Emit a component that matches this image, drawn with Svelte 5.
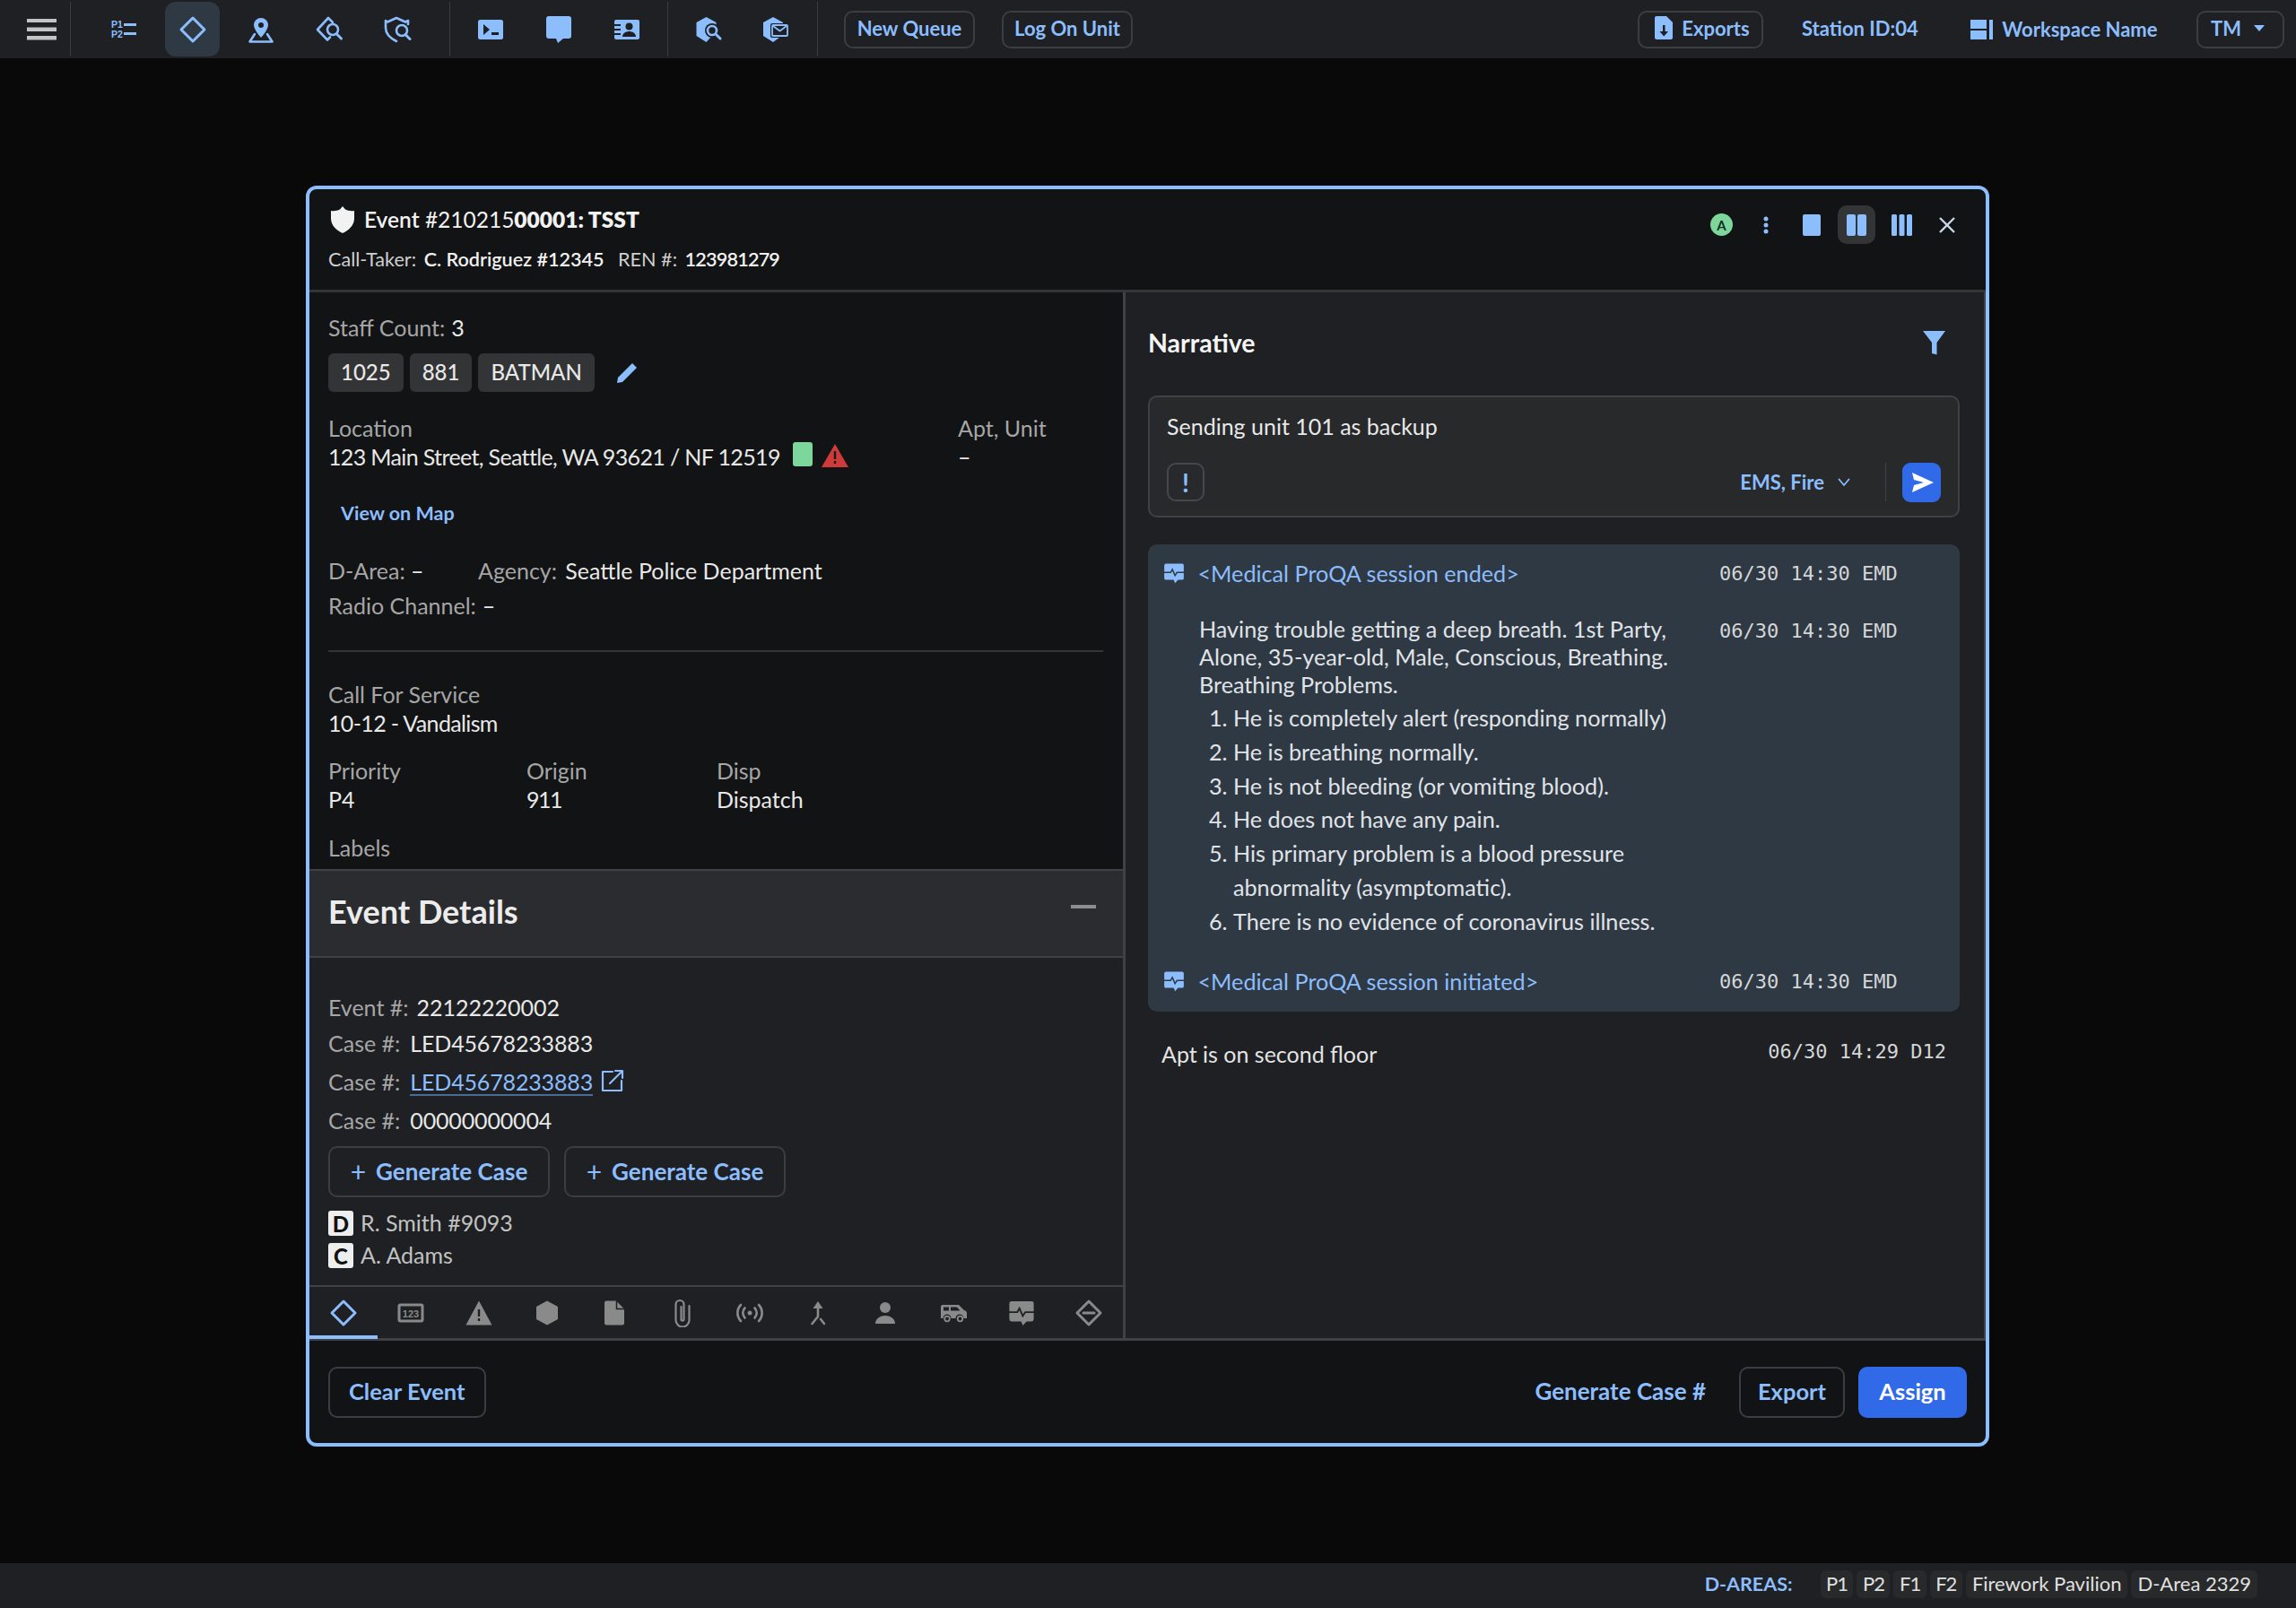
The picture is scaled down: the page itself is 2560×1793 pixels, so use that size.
<script>
  const list = [
    'He is completely alert (responding normally)',
    'He is breathing normally.',
    'He is not bleeding (or vomiting blood).',
    'He does not have any pain.',
    'His primary problem is a blood pressure abnormality (asymptomatic).',
    'There is no evidence of coronavirus illness.'
  ];
  const areas = ['P1', 'P2', 'F1', 'F2', 'Firework Pavilion', 'D-Area 2329'];
</script>

{#snippet pulse(size)}
  <svg width={size} height={size} viewBox="0 0 32 32" class="block">
    <path fill="currentColor" d="M4 2h24a2.500 2.500 0 0 1 2.500 2.500v19a2.500 2.500 0 0 1-2.500 2.500h-6l-4.500 5-2-5H4a2.500 2.500 0 0 1-2.500-2.500v-19A2.500 2.500 0 0 1 4 2z"/>
    <path class="cut" d="M0 15h11l2.500-4.500 4 9 3-4.500H32"/>
  </svg>
{/snippet}

<div class="page">
  <header class="topbar">
    <div class="group burger">
      <svg width="33" height="24" viewBox="0 0 33 24" class="block"><path fill="#c4c4c4" d="M0 0h33v4H0zM0 9.500h33v4.500H0zM0 19h33v4.500H0z"/></svg>
    </div>
    <div class="group g1">
      <span class="tool">
        <svg width="30" height="24" viewBox="0 0 30 24" class="block">
          <text x="0" y="10" class="pt">P1</text><text x="0" y="21" class="pt">P2</text>
          <path fill="currentColor" d="M14 5h14v3H14zM14 15h14v3H14z"/>
        </svg>
      </span>
      <span class="tool active">
        <svg width="32" height="32" viewBox="0 0 32 32" class="block"><path class="ln" d="M16 3l13 13-13 13L3 16z"/></svg>
      </span>
      <span class="tool">
        <svg width="32" height="32" viewBox="0 0 32 32" class="block">
          <path fill="currentColor" fill-rule="evenodd" d="M16 3a8 8 0 0 1 8 8c0 5-8 14-8 14S8 16 8 11a8 8 0 0 1 8-8zm0 5a3 3 0 1 0 0 6 3 3 0 0 0 0-6z"/>
          <path class="ln thin" d="M9 21l-5.500 8.500h25L23 21"/>
        </svg>
      </span>
      <span class="tool">
        <svg width="32" height="32" viewBox="0 0 32 32" class="block">
          <path class="ln thin" d="M20 8l-5-5L3 16l11 11.500 3-3"/>
          <circle class="ln thin" cx="20" cy="16" r="6"/>
          <path class="ln" d="M24.500 21l5 5"/>
        </svg>
      </span>
      <span class="tool">
        <svg width="32" height="32" viewBox="0 0 32 32" class="block">
          <path class="ln thin" d="M28 10V6l-3 1.500L15 3 5 7.500 3 6v8c0 7 6 12 12 15"/>
          <circle class="ln thin" cx="21" cy="17" r="6"/>
          <path class="ln" d="M25.500 22l4.500 4.500"/>
        </svg>
      </span>
    </div>
    <div class="group g2">
      <span class="tool">
        <svg width="28" height="24" viewBox="0 0 28 24" class="block">
          <rect width="28" height="22" y="1" rx="2.500" fill="currentColor"/>
          <path fill="#1e2023" d="M6 6l7 6-7 6zM15 15h8v3h-8z"/>
        </svg>
      </span>
      <span class="tool">
        <svg width="28" height="30" viewBox="0 0 28 30" class="block"><path fill="currentColor" d="M3 0h22a3 3 0 0 1 3 3v19a3 3 0 0 1-3 3h-6l-6 5-2-5H3a3 3 0 0 1-3-3V3a3 3 0 0 1 3-3z"/></svg>
      </span>
      <span class="tool">
        <svg width="28" height="24" viewBox="0 0 28 24" class="block">
          <path fill="currentColor" d="M2 1h24a2 2 0 0 1 2 2v18a2 2 0 0 1-2 2H2a2 2 0 0 1-2-2V3a2 2 0 0 1 2-2z"/>
          <path fill="#1e2023" d="M0 6h7v2H0zM0 11h7v2H0zM0 16h7v2H0z"/>
          <circle cx="16.500" cy="8.500" r="4" fill="#1e2023"/>
          <path fill="#1e2023" d="M9 20c0-4 4-6 7.500-6s7.500 2 7.500 6z"/>
        </svg>
      </span>
    </div>
    <div class="group g3">
      <span class="tool">
        <svg width="32" height="32" viewBox="0 0 32 32" class="block">
          <path fill="currentColor" d="M12.500 2l11 6v10l-11 12-11-7V8z"/>
          <circle cx="19" cy="17" r="8" fill="#1e2023"/>
          <circle class="ln thin" cx="19" cy="17" r="5"/>
          <path class="ln" d="M23.500 21.500l4.500 4.500"/>
        </svg>
      </span>
      <span class="tool">
        <svg width="32" height="32" viewBox="0 0 32 32" class="block">
          <path fill="currentColor" d="M13 2l11 6v14l-11 8-11-7V8z"/>
          <rect x="10" y="9" width="21" height="16" rx="2" fill="#1e2023"/>
          <rect x="12" y="11" width="17" height="12" rx="1" class="ln hair"/>
          <path class="ln hair" d="M13 12l7.500 5.500L28 12"/>
        </svg>
      </span>
    </div>
    <div class="group g4">
      <button class="ghost top">New Queue</button>
      <button class="ghost top">Log On Unit</button>
    </div>
    <div class="right">
      <button class="ghost top exports">
        <svg width="20" height="26" viewBox="0 0 20 26" class="block">
          <path fill="currentColor" d="M2 0h11l7 7v17a2 2 0 0 1-2 2H2a2 2 0 0 1-2-2V2a2 2 0 0 1 2-2z"/>
          <path fill="#1e2023" d="M9 10h2.500v7H15l-4.750 5.500L5.500 17H9z"/>
        </svg>
        Exports
      </button>
      <span class="blue-b station">Station ID:04</span>
      <span class="blue-b ws">
        <svg width="25" height="22" viewBox="0 0 25 22" class="block"><path fill="currentColor" d="M0 0h18v10H0zM0 12h18v10H0zM21 0h4v22h-4z"/></svg>
        Workspace Name
      </span>
      <button class="ghost top tm">TM <span class="caret"></span></button>
    </div>
  </header>

  <main class="stage">
    <section class="modal">
      <div class="mhead">
        <div>
          <div class="title">
            <svg width="26" height="30" viewBox="0 0 26 30" class="block">
              <path fill="#f2f2f2" d="M13 0l3 3.500c3 1.500 6 2 10 1.500v8c0 8-5 13-13 17C5 26 0 21 0 13V5c4 .5 7 0 10-1.500z"/>
            </svg>
            <span class="ttext"><b class="semi">Event</b> <span class="reg">#210215</span><b class="full">00001: TSST</b></span>
          </div>
          <div class="taker">
            <span class="soft">Call-Taker:</span> <b class="semi val">C. Rodriguez #12345</b>
            <span class="soft ren">REN #:</span> <b class="semi val digits">123981279</b>
          </div>
        </div>
        <div class="tools">
          <span class="avatar">A</span>
          <svg width="6" height="20" viewBox="0 0 6 20" class="block dots"><circle cx="3" cy="3" r="2.500"/><circle cx="3" cy="10" r="2.500"/><circle cx="3" cy="17" r="2.500"/></svg>
          <svg width="20" height="24" viewBox="0 0 20 24" class="block lay one"><rect width="20" height="24" rx="2"/></svg>
          <span class="layon">
            <svg width="22" height="24" viewBox="0 0 22 24" class="block lay"><rect width="10" height="24" rx="2"/><rect x="12" width="10" height="24" rx="2"/></svg>
          </span>
          <svg width="23" height="24" viewBox="0 0 23 24" class="block lay three"><rect width="6" height="24" rx="1.500"/><rect x="8.500" width="6" height="24" rx="1.500"/><rect x="17" width="6" height="24" rx="1.500"/></svg>
          <svg width="20" height="20" viewBox="0 0 20 20" class="block close"><path d="M2 2l16 16M18 2L2 18"/></svg>
        </div>
      </div>

      <div class="mbody">
        <div class="leftcol">
          <div class="info">
            <div class="row"><span class="lab">Staff Count:</span> 3</div>
            <div class="chips">
              <span class="chip">1025</span><span class="chip">881</span><span class="chip">BATMAN</span>
              <svg width="24" height="24" viewBox="0 0 24 24" class="block pencil"><path fill="currentColor" d="M18 1l5 5L7 22l-6 1 1-6z"/></svg>
            </div>
            <div class="locgrid">
              <div>
                <div class="line lab">Location</div>
                <div class="line addr"><span class="tight">123 Main Street, Seattle, WA 93621 / NF 12519</span>
                  <span class="flag"></span>
                  <svg width="30" height="26" viewBox="0 0 30 26" class="block warn"><path fill="#cf3a3a" d="M15 0l15 26H0z"/><path fill="#1b1b1b" d="M13.800 8h2.400v9h-2.400zM13.800 19h2.400v3h-2.400z"/></svg>
                </div>
              </div>
              <div>
                <div class="line lab">Apt, Unit</div>
                <div class="line">–</div>
              </div>
            </div>
            <div class="maplink">View on Map</div>
            <div class="row area"><span class="c1"><span class="lab">D-Area:</span> –</span><span><span class="lab">Agency:</span> <span class="agency">Seattle Police Department</span></span></div>
            <div class="row radio"><span class="lab">Radio Channel:</span> –</div>
            <hr />
            <div class="line lab">Call For Service</div>
            <div class="line tight">10-12 - Vandalism</div>
            <div class="triple">
              <div><div class="line lab">Priority</div><div class="line">P4</div></div>
              <div><div class="line lab">Origin</div><div class="line tighter">911</div></div>
              <div><div class="line lab">Disp</div><div class="line">Dispatch</div></div>
            </div>
            <div class="line lab labels">Labels</div>
          </div>

          <div class="dhead">
            <h2>Event Details</h2>
            <span class="minus"></span>
          </div>
          <div class="details">
            <div class="row g9"><span class="lab">Event #:</span> 22122220002</div>
            <div class="row m12 g11"><span class="lab">Case #:</span> <span class="led">LED45678233883</span></div>
            <div class="row m15 g11"><span class="lab">Case #:</span> <span class="ulink led">LED45678233883</span>
              <svg width="26" height="26" viewBox="0 0 26 26" class="block ext"><path class="ln hair2" d="M13 3H2v21h21V13M10 16L23 3M16 2h8v8" /></svg>
            </div>
            <div class="row m15 g11"><span class="lab">Case #:</span> <span class="led">00000000004</span></div>
            <div class="gens">
              <button class="ghost gen"><span class="plus">+</span>Generate Case</button>
              <button class="ghost gen"><span class="plus">+</span>Generate Case</button>
            </div>
            <div class="people">
              <div class="person"><span class="badge">D</span><span class="nm">R. Smith #9093</span></div>
              <div class="person"><span class="badge">C</span><span class="nm">A. Adams</span></div>
            </div>
          </div>

          <nav class="tabs">
            <span class="tab on"><svg width="32" height="32" viewBox="0 0 32 32" class="block"><path class="ln" d="M16 3l13 13-13 13L3 16z"/></svg></span>
            <span class="tab"><svg width="32" height="32" viewBox="0 0 32 32" class="block"><rect x="3" y="7" width="26" height="18" rx="1.500" class="ln"/><text x="16" y="20.500" class="tn">123</text></svg></span>
            <span class="tab"><svg width="32" height="32" viewBox="0 0 32 32" class="block"><path fill="currentColor" d="M16 2.500L30.500 29.500h-29z"/><path fill="#1e2023" d="M14.800 12h2.400v8h-2.400zM14.800 22h2.400v3h-2.400z"/></svg></span>
            <span class="tab"><svg width="32" height="32" viewBox="0 0 32 32" class="block"><path fill="currentColor" d="M16 2.500l12 6.500v14l-12 6.500L4 23V9z"/></svg></span>
            <span class="tab"><svg width="32" height="32" viewBox="0 0 32 32" class="block"><path fill="currentColor" d="M7 2.500h11l9 9v16a2 2 0 0 1-2 2H7a2 2 0 0 1-2-2v-23a2 2 0 0 1 2-2z"/><path fill="none" stroke="#1e2023" stroke-width="1.500" d="M18.500 2.500v9h8.500"/></svg></span>
            <span class="tab"><svg width="32" height="32" viewBox="0 0 32 32" class="block"><path class="ln hair2" d="M23.500 8v16a7.500 7.500 0 0 1-15 0V6.500a4.500 4.500 0 0 1 9 0V23a1.500 1.500 0 0 1-3 0V9"/></svg></span>
            <span class="tab"><svg width="32" height="32" viewBox="0 0 32 32" class="block"><circle cx="16" cy="16" r="2.500" fill="currentColor"/><path class="ln thin" d="M10.500 10.500a8 8 0 0 0 0 11M21.500 10.500a8 8 0 0 1 0 11M6 7a13 13 0 0 0 0 18M26 7a13 13 0 0 1 0 18"/></svg></span>
            <span class="tab"><svg width="32" height="32" viewBox="0 0 32 32" class="block"><path fill="currentColor" d="M16 3l5.500 8h-11z"/><path class="ln thin" d="M16 10v10l-6.500 8M19 23l4 5"/></svg></span>
            <span class="tab"><svg width="32" height="32" viewBox="0 0 32 32" class="block"><circle cx="16" cy="10" r="6" fill="currentColor"/><path fill="currentColor" d="M5 28c0-6 6-9 11-9s11 3 11 9z"/></svg></span>
            <span class="tab"><svg width="32" height="32" viewBox="0 0 32 32" class="block"><path fill="currentColor" d="M2 9a2 2 0 0 1 2-2h18l6 6c2 .5 3 1.500 3 3v6h-3.500a4.500 4.500 0 0 0-9 0h-5a4.500 4.500 0 0 0-9 0H2z"/><path fill="#1e2023" d="M5 9.500h6v4H5zM13 9.500h7l3.500 4H13z"/><circle cx="9" cy="22.500" r="2.800" class="ln hair"/><circle cx="23.500" cy="22.500" r="2.800" class="ln hair"/></svg></span>
            <span class="tab pulse-g">{@render pulse(30)}</span>
            <span class="tab"><svg width="32" height="32" viewBox="0 0 32 32" class="block"><path class="ln" d="M16 3l13 13-13 13L3 16z"/><path class="ln" d="M10 16h12"/></svg></span>
          </nav>
        </div>

        <div class="rightcol">
          <div class="nhead">
            <h3>Narrative</h3>
            <svg width="25" height="27" viewBox="0 0 25 27" class="block funnel"><path fill="currentColor" d="M0 0h25l-9.500 13v13.500L10 25V13z"/></svg>
          </div>
          <div class="compose">
            <div class="ctext">Sending unit 101 as backup</div>
            <div class="cbar">
              <span class="bang">!</span>
              <span class="cgroup">EMS, Fire
                <svg width="14" height="10" viewBox="0 0 14 10" class="block chev"><path class="ln hair" d="M1.500 1.500L7 8l5.500-6.500"/></svg>
              </span>
              <span class="cdiv"></span>
              <span class="send"><svg width="26" height="26" viewBox="0 0 26 26" class="block"><path fill="#fff" d="M2 2l24 11L2 24l2-8 11-3-11-3z"/></svg></span>
            </div>
          </div>

          <div class="proqa">
            <div class="nrow">
              <span class="pi">{@render pulse(24)}</span>
              <span class="plink">&lt;Medical ProQA session ended&gt;</span>
              <span class="time">06/30 14:30 EMD</span>
            </div>
            <div class="nrow big">
              <div class="ntext">
                <p>Having trouble getting a deep breath. 1st Party,<br />Alone, 35-year-old, Male, Conscious, Breathing.<br />Breathing Problems.</p>
                <ol>
                  {#each list as item}<li>{item}</li>{/each}
                </ol>
              </div>
              <span class="time t2">06/30 14:30 EMD</span>
            </div>
            <div class="nrow last">
              <span class="pi">{@render pulse(24)}</span>
              <span class="plink">&lt;Medical ProQA session initiated&gt;</span>
              <span class="time">06/30 14:30 EMD</span>
            </div>
          </div>

          <div class="apt">
            <span>Apt is on second floor</span>
            <span class="time">06/30 14:29 D12</span>
          </div>
        </div>
      </div>

      <footer class="mfoot">
        <button class="ghost act clear">Clear Event</button>
        <div class="fright">
          <span class="gcase">Generate Case #</span>
          <button class="ghost act export">Export</button>
          <button class="assign">Assign</button>
        </div>
      </footer>
    </section>
  </main>

  <footer class="status">
    <span class="blue-b dl">D-AREAS:</span>
    {#each areas as a}<span class="area-chip" class:short={a.length < 3}>{a}</span>{/each}
  </footer>
</div>

<style>
  :global(body) {
    margin: 0;
    background: #090909;
    font-family: Lato, "Liberation Sans", sans-serif;
    color: #e8e8e8;
  }
  .block { display: block; flex: none; }
  .page { height: 1793px; display: flex; flex-direction: column; overflow: hidden; }

  .topbar { height: 65px; background: #1e2023; display: flex; color: #8cbdfd; flex: none; }
  .group { display: flex; align-items: center; box-sizing: border-box; position: relative; }
  .group + .group::before {
    content: ""; position: absolute; left: 0; top: 2px; bottom: 2px; width: 1px; background: #3a3c3f;
  }
  .burger { width: 78px; padding-left: 30px; color: #c4c4c4; }
  .tool { width: 61px; height: 61px; display: flex; align-items: center; justify-content: center; border-radius: 12px; }
  .tool.active { background: #2f3944; }
  .g1 { width: 423px; padding-left: 30px; gap: 15px; }
  .g2 { width: 243px; padding-left: 15px; gap: 15px; }
  .g3 { width: 167px; padding-left: 16px; gap: 13px; }
  .g4 { padding-left: 30px; gap: 30px; }
  .pt { font: 700 10.5px "Liberation Sans", sans-serif; fill: currentColor; }
  .ln { fill: none; stroke: currentColor; stroke-width: 3; stroke-linejoin: round; stroke-linecap: round; }
  .ln.thin { stroke-width: 2.600; }
  .ln.hair { stroke-width: 1.800; }
  .ln.hair2 { stroke-width: 2.200; }
  .cut { fill: none; stroke: #1e2023; stroke-width: 2; stroke-linejoin: miter; }
  .pi .cut { stroke: #2f3944; }

  button { font-family: inherit; cursor: pointer; }
  .ghost { background: transparent; border: 2px solid #3b3d40; color: #8cbdfd; border-radius: 10px; font-weight: 700; }
  .top { height: 42px; width: 146px; font-size: 22px; padding: 0 0 3px; }
  .right { margin-left: auto; display: flex; align-items: center; padding-right: 13px; color: #8cbdfd; }
  .exports { width: 140px; display: flex; align-items: center; justify-content: center; gap: 10px; padding-left: 4px; }
  .blue-b { font-weight: 700; color: #8cbdfd; font-size: 22px; }
  .station { margin-left: 43px; padding-bottom: 3px; }
  .ws { margin-left: 58.500px; display: flex; align-items: center; gap: 10px; }
  .tm { width: 98px; margin-left: 43.500px; display: flex; align-items: center; justify-content: flex-start; gap: 14px; padding-left: 14px; }
  .caret { width: 0; height: 0; border: 6px solid transparent; border-top: 7px solid #8cbdfd; border-bottom: 0; }

  .stage { flex: 1; padding: 142px 0 0 341px; }
  .modal {
    width: 1877px; height: 1406px; box-sizing: border-box; border: 4px solid #8cbdfd; border-radius: 12px;
    background: #121314; display: flex; flex-direction: column; overflow: hidden;
  }
  .mhead { height: 115px; box-sizing: border-box; border-bottom: 3px solid #333537; padding: 18px 0 0 21px; display: flex; justify-content: space-between; flex: none; }
  .title { display: flex; align-items: center; gap: 11px; font-size: 24.500px; height: 32px; padding-left: 3px; color: #f2f2f2; }
  .ttext { padding-bottom: 2px; }
  .reg { font-weight: 400; }
  .semi { font-weight: 600; }
  .full { font-weight: 800; }
  .taker { margin-top: 13px; font-size: 21.600px; line-height: 30px; color: #f0f0f0; }
  .soft { color: #cfcfcf; }
  .val { margin-left: 3px; }
  .digits { letter-spacing: -0.800px; }
  .ren { margin-left: 10px; }
  .tools { display: flex; align-items: center; height: 43px; padding-right: 33px; color: #8cbdfd; }
  .avatar { width: 25px; height: 25px; border-radius: 50%; background: #7dd69c; color: #13301f; font-size: 15px; font-weight: 700; display: flex; align-items: center; justify-content: center; margin-right: -3px; }
  .dots { margin-left: 37px; fill: #8cbdfd; }
  .lay { fill: #8cbdfd; }
  .one { margin-left: 38px; }
  .layon { width: 42px; height: 43px; background: #333436; border-radius: 10px; margin-left: 19px; display: flex; align-items: center; justify-content: center; }
  .three { margin-left: 18px; }
  .close { margin-left: 29px; fill: none; stroke: #c8d6e6; stroke-width: 2.400; }

  .mbody { height: 1169px; flex: none; display: flex; border-bottom: 3px solid #3f4144; box-sizing: border-box; }
  .leftcol { width: 910px; box-sizing: border-box; border-right: 3px solid #3f4144; display: flex; flex-direction: column; flex: none; }
  .info { flex: 1; min-height: 0; overflow: hidden; padding: 26px 22px 0 21px; font-size: 25px; }
  .row { height: 28px; line-height: 26px; font-size: 25px; display: flex; align-items: flex-start; gap: 7px; }
  .line { height: 32px; line-height: 30px; font-size: 25px; }
  .lab { color: #a6a6a6; }
  .tight { letter-spacing: -0.640px; }
  .tighter { letter-spacing: -1.500px; }
  .agency { margin-left: 3px; }
  .chips { display: flex; align-items: center; gap: 7px; margin-top: 14px; }
  .chip { height: 43px; padding: 0 14px; background: #333436; border-radius: 6px; line-height: 41px; font-size: 24px; font-weight: 500; }
  .pencil { color: #8cbdfd; margin-left: 17px; }
  .locgrid { display: grid; grid-template-columns: 702px 1fr; margin-top: 25px; }
  .addr { display: flex; align-items: flex-start; gap: 8px; }
  .flag { width: 22px; height: 27px; background: #7dd69c; border-radius: 3px; margin: -1px 2px 0 6px; }
  .warn { margin-top: 1px; }
  .maplink { margin: 32px 0 0 14px; height: 30px; line-height: 28px; font-size: 21.500px; font-weight: 700; color: #8cbdfd; }
  .area { margin-top: 35px; gap: 0; }
  .c1 { width: 167px; }
  .radio { margin-top: 11px; }
  hr { border: 0; height: 2px; background: #333537; margin: 35px 0 32px; }
  .triple { display: grid; grid-template-columns: 221px 212px 1fr; margin-top: 21px; }
  .labels { margin-top: 22px; }

  .dhead { height: 99px; box-sizing: border-box; background: #2a2c2f; border-top: 2px solid #3f4144; border-bottom: 2px solid #3f4144; display: flex; justify-content: space-between; padding: 0 30px 0 21px; flex: none; }
  h2 { margin: 0; font-size: 36px; line-height: 90px; font-weight: 700; color: #ececec; }
  .minus { width: 28px; height: 4px; background: #8e8e8e; margin-top: 38px; }
  .details { background: #1e2023; padding: 42px 21px 19px; flex: none; }
  .m12 { margin-top: 12px; }
  .m15 { margin-top: 15px; }
  .g9 { gap: 9px; }
  .g11 { gap: 11px; }
  .led { letter-spacing: -0.150px; }
  .ulink { color: #8cbdfd; border-bottom: 2px solid #4a6b93; height: 27px; }
  .ext { color: #8cbdfd; margin-left: -2px; margin-top: -1px; }
  .gens { display: flex; gap: 16px; margin-top: 14px; }
  .gen { width: 247px; height: 57px; font-size: 26px; padding: 0 0 2px; display: flex; align-items: center; justify-content: center; }
  .plus { font-size: 30px; font-weight: 400; margin-right: 11px; line-height: 1; }
  .people { margin-top: 15px; display: flex; flex-direction: column; gap: 8px; }
  .person { display: flex; align-items: flex-start; gap: 8px; height: 28px; line-height: 26px; font-size: 25px; color: #c2c2c2; }
  .badge { width: 28px; height: 28px; background: #eee; color: #111; border-radius: 3px; font-weight: 900; font-size: 24px; line-height: 29px; text-align: center; }

  .tabs { height: 59px; box-sizing: border-box; background: #1e2023; border-top: 2px solid #3f4144; display: grid; grid-template-columns: repeat(12, 1fr); color: #8a8a8a; flex: none; }
  .tab { display: flex; align-items: center; justify-content: center; position: relative; }
  .tab.on { color: #8cbdfd; }
  .tab.on::after { content: ""; position: absolute; left: 0; right: 0; bottom: -1px; height: 4px; background: #8cbdfd; }
  .tn { font: 700 11px "Liberation Sans", sans-serif; fill: currentColor; text-anchor: middle; }

  .rightcol { flex: 1; min-width: 0; background: #1e2023; border-right: 2px solid #3f4144; padding: 36px 27px 0 25px; box-sizing: border-box; }
  .nhead { display: flex; justify-content: space-between; align-items: center; height: 40px; padding-right: 16px; }
  h3 { margin: 0; font-size: 28.500px; font-weight: 700; color: #f4f4f4; }
  .funnel { color: #8cbdfd; }
  .compose { margin-top: 39px; height: 136px; box-sizing: border-box; background: #27292b; border: 2px solid #3f4144; border-radius: 10px; padding: 18px 19px 0; }
  .ctext { height: 30px; line-height: 28px; font-size: 25px; }
  .cbar { display: flex; align-items: center; margin-top: 25px; height: 43px; }
  .bang { width: 42px; height: 43px; box-sizing: border-box; border: 2px solid #45474a; border-radius: 10px; display: flex; align-items: center; justify-content: center; font-size: 28px; font-weight: 700; color: #8cbdfd; }
  .cgroup { margin-left: auto; display: flex; align-items: center; gap: 15px; font-size: 22px; font-weight: 700; color: #8cbdfd; }
  .chev { color: #8cbdfd; }
  .cdiv { width: 1px; height: 43px; background: #3f4144; margin: 0 18px 0 39px; }
  .send { width: 43px; height: 44px; background: #316ae8; border-radius: 9px; display: flex; align-items: center; justify-content: center; }

  .proqa { margin-top: 30px; background: #2f3944; border-radius: 10px; height: 521px; box-sizing: border-box; padding: 18px 0 0 17px; color: #e0e4e8; }
  .nrow { display: flex; align-items: center; font-size: 25.200px; line-height: 30px; }
  .nrow.big { align-items: flex-start; margin-top: 31px; }
  .nrow.last { margin-top: 33px; }
  .pi { color: #8cbdfd; width: 38.500px; flex: none; margin-top: -2px; }
  .plink { color: #8cbdfd; width: 581.500px; flex: none; height: 30px; line-height: 28px; }
  .time { font-family: "DejaVu Sans Mono", "Liberation Mono", monospace; font-size: 22px; color: #d4d6d8; white-space: nowrap; }
  .t2 { padding-top: 3px; }
  .ntext { width: 580px; margin-left: 40px; flex: none; }
  .ntext p { margin: 0; line-height: 31px; }
  ol { margin: 3px 0 0; padding-left: 38px; }
  li { line-height: 37.800px; width: 490px; }

  .apt { display: flex; justify-content: space-between; align-items: flex-start; padding: 33px 15px 0 15px; font-size: 25px; color: #e4e4e4; line-height: 28px; }
  .apt .time { line-height: 24px; }

  .mfoot { flex: none; height: 114px; display: flex; align-items: center; justify-content: space-between; padding: 0 21px; box-sizing: border-box; }
  .fright { display: flex; align-items: center; }
  .act { height: 57px; font-size: 25.500px; padding: 0 21px 3px; }
  .export { width: 118px; padding-left: 0; padding-right: 0; }
  .gcase { font-size: 26px; font-weight: 700; color: #8cbdfd; margin-right: 37px; padding-bottom: 3px; }
  .assign { margin-left: 15px; width: 121px; height: 57px; border: 0; border-radius: 10px; background: #316ae8; color: #fff; font-size: 25.500px; font-weight: 700; padding: 0 0 3px; }

  .status { height: 50px; flex: none; background: #1e2023; display: flex; align-items: center; justify-content: flex-end; gap: 4px; padding: 0 43px 4px 0; box-sizing: border-box; }
  .dl { margin-right: 27px; font-size: 21.500px; }
  .area-chip { height: 31px; line-height: 29px; padding: 0 7px; border-radius: 6px; background: #27292b; font-size: 22px; color: #e0e0e0; }
  .area-chip.short { letter-spacing: -1px; padding: 0 6.500px; }
</style>
